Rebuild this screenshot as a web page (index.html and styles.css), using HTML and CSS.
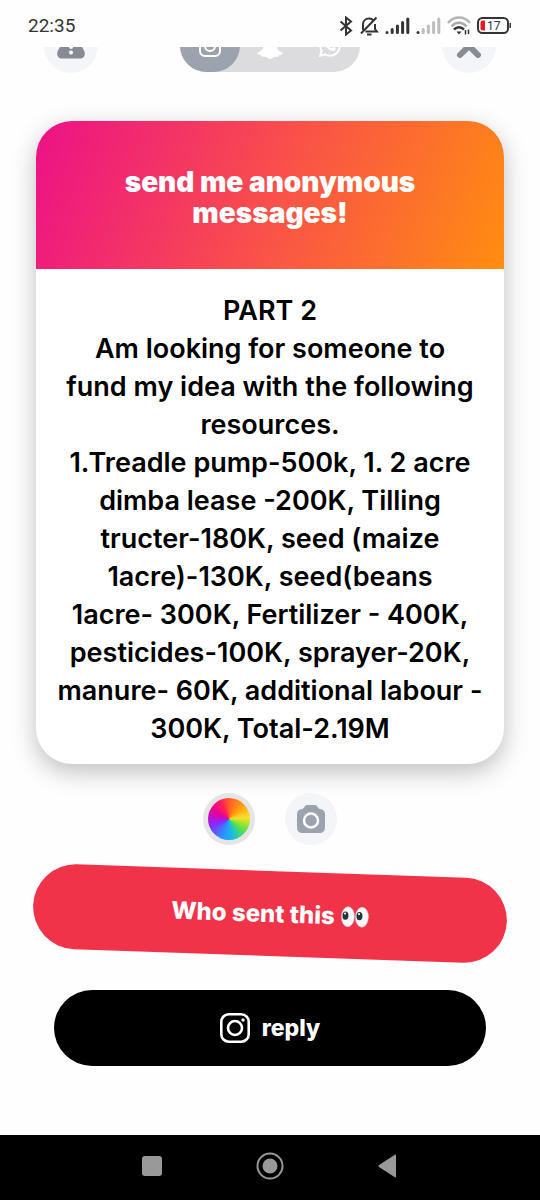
FILE: index.html
```html
<!DOCTYPE html>
<html lang="en">
<head>
<meta charset="utf-8">
<meta name="viewport" content="width=device-width, initial-scale=1">
<title>Anonymous message</title>
<link rel="stylesheet" href="styles.css">
</head>
<body>
<div class="screen">
  <header class="status">
    <time class="clock">22:35</time>
    <div class="status-icons">
      <svg width="14" height="20" viewBox="0 0 14 20" fill="none" stroke="#333" stroke-width="2"><path d="M1.5 5.500 12 14.500 7 18.500V1.500L12 5.500 1.500 14.500"/></svg>
      <svg width="20" height="20" viewBox="0 0 20 20" fill="none" stroke="#333" stroke-width="2"><path d="M4 14V8.500C4 5 6.500 2.500 10 2.500c2 0 3.500.8 4.500 2M16 8v5l2 2.500H6.500M8 18.500h4.500M2 17.500 17.500 1.500"/></svg>
      <svg width="25" height="18" viewBox="0 0 25 18" stroke="#333" stroke-width="3" stroke-linecap="round"><path d="M2 15.500v.1M7.200 12.500v3M12.400 9v6.500M17.600 5.500v10M22.800 2v13.500"/></svg>
      <svg width="25" height="18" viewBox="0 0 25 18" stroke="#bdbdbd" stroke-width="3" stroke-linecap="round"><path stroke="#333" d="M2 15.500v.1"/><path d="M7.200 12.500v3M12.400 9v6.500M17.600 5.500v10M22.800 2v13.500"/></svg>
      <svg width="24" height="19" viewBox="0 0 24 19" fill="none" stroke-width="2.500"><path stroke="#b5b5b5" d="M1 7C7-.2 17-.2 23 7"/><path stroke="#aaa" d="M4.500 10.500c4.500-5 10.500-5 15 0"/><path stroke="#333" d="M7 13.500c3-3 7-3 10 0"/><path fill="#333" d="M9.500 15.500h5L12 18.500z"/><path stroke="#333" stroke-width="1.500" d="M18.500 18.500V14M21.500 13.500V18"/></svg>
      <svg class="battery" width="35" height="17" viewBox="0 0 35 17"><rect x="1" y="1" width="30" height="15" rx="4.500" fill="#fff" stroke="#333" stroke-width="2"/><path fill="#e31b23" d="M5.500 3.500H8v10H5.500a2 2 0 0 1-2-2v-6a2 2 0 0 1 2-2z"/><path fill="#333" d="M32.500 6h1.500v5h-1.500z"/><text class="level" x="10" y="13">17</text></svg>
    </div>
  </header>

  <nav class="toolbar" aria-label="Share options">
    <button class="round" aria-label="Report">
      <svg width="54" height="54" viewBox="0 0 54 54"><path fill="#868b94" d="M24 13.500c1.500-3 4.500-3 6 0l10 18c2 4 0 8-4 8H18c-4 0-6-4-4-8z"/><path stroke="#fff" stroke-width="4" stroke-linecap="round" d="M27 20v8M27 33.500v.1"/></svg>
    </button>
    <div class="networks">
      <button class="network selected" aria-label="Instagram">
        <svg width="24" height="24" viewBox="0 0 24 24" fill="none" stroke="#fff" stroke-width="2"><rect x="2" y="2" width="20" height="20" rx="5"/><circle cx="12" cy="12" r="5"/><circle cx="17.500" cy="6.500" r=".5"/></svg>
      </button>
      <button class="network" aria-label="Snapchat">
        <svg width="28" height="28" viewBox="0 0 28 28" fill="#fff"><path d="M14 1c5 0 7 3.500 7 7l-.2 4c.8.700 3-.8 3 1 0 1-2.800 1.500-2.800 2.500 0 1.500 2 4 6 5.500-.5 1.500-2 2-4 2.300-.5 0-.5 1.200-1 1.400-1 .3-2-.3-4 .3-1.300.5-2 2-4 2s-2.700-1.500-4-2c-2-.6-3 0-4-.3-.5-.2-.5-1.400-1-1.400-2-.3-3.500-.8-4-2.300 4-1.500 6-4 6-5.500 0-1-2.800-1.500-2.800-2.500 0-1.800 2.200-.3 3-1L7 8c0-3.500 2-7 7-7z"/></svg>
      </button>
      <button class="network" aria-label="WhatsApp">
        <svg width="24" height="24" viewBox="0 0 24 24"><path fill="none" stroke="#fff" stroke-width="2" d="m2.200 21.800 1.400-5A9.700 9.700 0 1 1 7.200 20.400z"/><path fill="#fff" d="M8.500 6.500c.8-.2 1 .3 1.800 2.300.2.600-.9 1.400-.8 1.800 1 1.900 2.300 3 4.200 3.700.5.100 1.200-1.400 1.700-1.300l2.200 1.100c.4.300-.1 1.900-.9 2.400-1.900 1.200-4.500.1-6.500-1.500-2.300-1.900-3.800-4.300-3.500-6 .1-1.100.9-2.200 1.800-2.500z"/></svg>
      </button>
    </div>
    <button class="round" aria-label="Close">
      <svg width="54" height="54" viewBox="0 0 54 54" fill="none" stroke="#868b94" stroke-width="6" stroke-linecap="round"><path d="m18 18 18 18M36 18 18 36"/></svg>
    </button>
  </nav>

  <main class="content">
    <article class="card">
      <h1 class="prompt">send me anonymous<br>messages!</h1>
      <p class="message">PART 2<br>Am looking for someone to<br>fund my idea with the following<br>resources.<br>1.Treadle pump-500k, 1. 2 acre<br>dimba lease -200K, Tilling<br>tructer-180K, seed (maize<br>1acre)-130K, seed(beans<br>1acre- 300K, Fertilizer - 400K,<br>pesticides-100K, sprayer-20K,<br>manure- 60K, additional labour -<br>300K, Total-2.19M</p>
    </article>

    <div class="tools">
      <button class="tool color" aria-label="Change color"><span class="wheel"></span></button>
      <button class="tool" aria-label="Camera">
        <svg width="28" height="28" viewBox="0 0 28 28"><path fill="#9ca3af" d="M10 0h8c2.500 0 2.500 3.500 5 4 3 .2 5 2 5 5v13c0 4-2 6-6 6H6c-4 0-6-2-6-6V9c0-3 2-4.800 5-5 2.500-.5 2.500-4 5-4z"/><circle cx="14" cy="15.500" r="7" fill="none" stroke="#fff" stroke-width="2.500"/></svg>
      </button>
    </div>

    <button class="who">Who sent this
      <svg width="28" height="24" viewBox="0 0 28 24"><g fill="#f7f7f7" stroke="#c9c9cd" stroke-width=".6"><ellipse cx="7" cy="12" rx="6.500" ry="10"/><ellipse cx="21" cy="12" rx="6.500" ry="10"/></g><g fill="#27343b"><ellipse cx="4.500" cy="11" rx="3" ry="4.200"/><ellipse cx="18.500" cy="11" rx="3" ry="4.200"/></g><g fill="#fff"><circle cx="4" cy="9" r="1"/><circle cx="18" cy="9" r="1"/></g></svg>
    </button>

    <button class="reply">
      <svg width="30" height="30" viewBox="0 0 30 30" fill="none" stroke="#fff" stroke-width="2.600"><rect x="1.300" y="1.300" width="27.400" height="27.400" rx="7.500"/><circle cx="15" cy="15" r="7"/><circle cx="23" cy="7" r="1.700" fill="#fff" stroke="none"/></svg>
      reply
    </button>
  </main>

  <footer class="system">
    <button class="key" aria-label="Recent apps"><svg width="28" height="28" viewBox="0 0 28 28"><rect x="4" y="4" width="20" height="20" rx="3" fill="#999"/></svg></button>
    <button class="key" aria-label="Home"><svg width="28" height="28" viewBox="0 0 28 28"><circle cx="14" cy="14" r="12.500" fill="none" stroke="#999" stroke-width="2"/><circle cx="14" cy="14" r="7.500" fill="#999"/></svg></button>
    <button class="key" aria-label="Back"><svg width="28" height="28" viewBox="0 0 28 28"><path fill="#999" d="M22 3.500v21q0 1.500-1.500.5L5 15q-1.500-1 0-2L20.500 3q1.500-1 1.500.5z"/></svg></button>
  </footer>
</div>
</body>
</html>
```
FILE: styles.css
```css
* {
  box-sizing: border-box;
}

body {
  margin: 0;
  background: #fefefe;
  font-family: Inter, "Open Sans", sans-serif;
}

button {
  margin: 0;
  padding: 0;
  border: 0;
  font: inherit;
  cursor: pointer;
}

svg {
  display: block;
  flex: none;
}

.screen {
  display: flex;
  flex-direction: column;
  min-height: 100vh;
}

.status {
  display: flex;
  align-items: center;
  justify-content: space-between;
  height: 47px;
  padding: 4px 28px 0;
}

.clock {
  color: #333;
  font: 19px/24px Roboto, sans-serif;
}

.status-icons {
  display: flex;
  align-items: center;
  gap: 6px;
}

.level {
  fill: #333;
  font: 12px Roboto, sans-serif;
}

.toolbar {
  display: flex;
  align-items: flex-end;
  justify-content: space-between;
  height: 26px;
  padding: 0 44px;
  overflow: hidden;
}

.round {
  width: 54px;
  height: 54px;
  border-radius: 50%;
  background: #f4f5f9;
}

.networks {
  display: flex;
  height: 54px;
  padding-bottom: 1px;
  border-radius: 27px;
  background: #dcdcdf;
  background-clip: content-box;
}

.network {
  display: flex;
  align-items: center;
  justify-content: center;
  width: 60px;
  border-radius: 27px;
  background: transparent;
}

.selected {
  background: #9ca3af;
}

.content {
  display: flex;
  flex-direction: column;
  padding: 48px 36px 0;
}

.card {
  overflow: hidden;
  border-radius: 36px;
  background: #fff;
  box-shadow: 0 8px 24px rgba(0, 0, 0, 0.25);
  text-align: center;
}

.prompt {
  margin: 0;
  padding: 46px 24px 40px;
  background: linear-gradient(110deg, #ec1187 0%, #f94f4b 50%, #ff8d10 100%);
  color: #fff;
  font-size: 28px;
  font-weight: 900;
  line-height: 31px;
}

.message {
  margin: 0;
  padding: 23px 16px 16px;
  color: #000;
  font-size: 27px;
  font-weight: 600;
  line-height: 38px;
}

.tools {
  display: flex;
  justify-content: center;
  gap: 30px;
  margin-top: 29px;
}

.tool {
  display: grid;
  place-items: center;
  width: 52px;
  height: 52px;
  border-radius: 50%;
  background: #f4f5f9;
}

.color {
  background: #e5e5e8;
}

.wheel {
  width: 42px;
  height: 42px;
  border-radius: 50%;
  background: conic-gradient(#ff5a2a, #ff9f0a 45deg, #f8e02a 85deg, #5fe63c 125deg, #18b8e8 170deg, #2f8cff 205deg, #8a25ff 250deg, #e6009c 295deg, #ff1f5a 335deg, #ff5a2a);
}

.who,
.reply {
  display: flex;
  align-items: center;
  justify-content: center;
  color: #fff;
  font-size: 23px;
  font-weight: 800;
}

.who {
  gap: 6px;
  height: 85px;
  margin: 26px -3px 0;
  border-radius: 43px;
  background: #f13349;
  font-size: 24px;
  transform: rotate(2deg);
}

.reply {
  gap: 12px;
  height: 76px;
  margin: 34px 18px 0;
  border-radius: 38px;
  background: #000;
}

.system {
  display: flex;
  align-items: center;
  justify-content: center;
  gap: 90px;
  height: 65px;
  margin-top: auto;
  padding-bottom: 4px;
  background: #000;
}

.key {
  background: transparent;
}
```
